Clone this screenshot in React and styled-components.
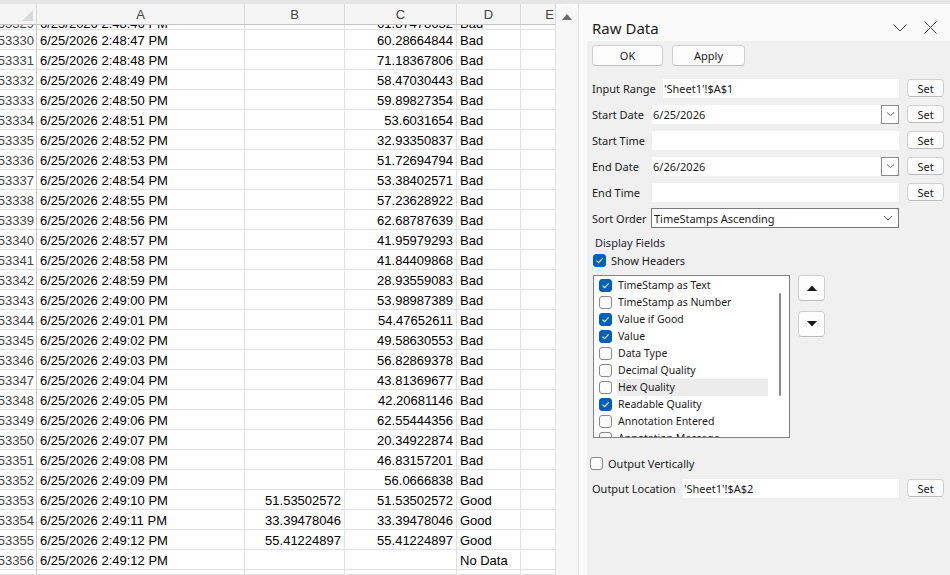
import { styled, createGlobalStyle } from "styled-components";

const GlobalStyle = createGlobalStyle`
  html, body {
    margin: 0;
    padding: 0;
    background: #ffffff;
  }
  #root {
    width: 950px;
    height: 575px;
    overflow: hidden;
  }
`;

const rows = [
  [53329, "6/25/2026 2:48:46 PM", "", "61.87478632", "Bad"],
  [53330, "6/25/2026 2:48:47 PM", "", "60.28664844", "Bad"],
  [53331, "6/25/2026 2:48:48 PM", "", "71.18367806", "Bad"],
  [53332, "6/25/2026 2:48:49 PM", "", "58.47030443", "Bad"],
  [53333, "6/25/2026 2:48:50 PM", "", "59.89827354", "Bad"],
  [53334, "6/25/2026 2:48:51 PM", "", "53.6031654", "Bad"],
  [53335, "6/25/2026 2:48:52 PM", "", "32.93350837", "Bad"],
  [53336, "6/25/2026 2:48:53 PM", "", "51.72694794", "Bad"],
  [53337, "6/25/2026 2:48:54 PM", "", "53.38402571", "Bad"],
  [53338, "6/25/2026 2:48:55 PM", "", "57.23628922", "Bad"],
  [53339, "6/25/2026 2:48:56 PM", "", "62.68787639", "Bad"],
  [53340, "6/25/2026 2:48:57 PM", "", "41.95979293", "Bad"],
  [53341, "6/25/2026 2:48:58 PM", "", "41.84409868", "Bad"],
  [53342, "6/25/2026 2:48:59 PM", "", "28.93559083", "Bad"],
  [53343, "6/25/2026 2:49:00 PM", "", "53.98987389", "Bad"],
  [53344, "6/25/2026 2:49:01 PM", "", "54.47652611", "Bad"],
  [53345, "6/25/2026 2:49:02 PM", "", "49.58630553", "Bad"],
  [53346, "6/25/2026 2:49:03 PM", "", "56.82869378", "Bad"],
  [53347, "6/25/2026 2:49:04 PM", "", "43.81369677", "Bad"],
  [53348, "6/25/2026 2:49:05 PM", "", "42.20681146", "Bad"],
  [53349, "6/25/2026 2:49:06 PM", "", "62.55444356", "Bad"],
  [53350, "6/25/2026 2:49:07 PM", "", "20.34922874", "Bad"],
  [53351, "6/25/2026 2:49:08 PM", "", "46.83157201", "Bad"],
  [53352, "6/25/2026 2:49:09 PM", "", "56.0666838", "Bad"],
  [53353, "6/25/2026 2:49:10 PM", "51.53502572", "51.53502572", "Good"],
  [53354, "6/25/2026 2:49:11 PM", "33.39478046", "33.39478046", "Good"],
  [53355, "6/25/2026 2:49:12 PM", "55.41224897", "55.41224897", "Good"],
  [53356, "6/25/2026 2:49:12 PM", "", "", "No Data"],
  ["", "", "", "", ""],
];

const fields = [
  ["TimeStamp as Text", true],
  ["TimeStamp as Number", false],
  ["Value if Good", true],
  ["Value", true],
  ["Data Type", false],
  ["Decimal Quality", false],
  ["Hex Quality", false, true],
  ["Readable Quality", true],
  ["Annotation Entered", false],
  ["Annotation Message", false],
];

const CheckMark = () => (
  <svg width="9" height="9" viewBox="0 0 9 9">
    <path d="M1.5 4.6 L3.6 6.6 L7.6 2.4" fill="none" stroke="#fff" strokeWidth="1.1" />
  </svg>
);

const Check = ({ on }) => <Box $on={on}>{on && <CheckMark />}</Box>;

const FieldRow = ({ label, width, value, combo, set = true }) => (
  <Row>
    <Label $w={width}>{label}</Label>
    <Field>
      <FieldText>{value}</FieldText>
      {combo && (
        <DropBtn>
          <svg width="9" height="6" viewBox="0 0 9 6">
            <path d="M1 1.5 L4.5 4.5 L8 1.5" fill="none" stroke="#555" strokeWidth="0.9" />
          </svg>
        </DropBtn>
      )}
    </Field>
    {set && <SetButton>Set</SetButton>}
  </Row>
);

const App = () => {
  return (
    <>
      <GlobalStyle />
      <Page>
        <TopStrip />
        <Main>
          <Sheet>
            <HeaderRow>
              <Corner />
              <ColHead>A</ColHead>
              <ColHead>B</ColHead>
              <ColHead>C</ColHead>
              <ColHead>D</ColHead>
              <ColHead $cut>E</ColHead>
            </HeaderRow>
            {rows.map((r, i) => {
              const partial = i === 0 || i === rows.length - 1;
              return (
                <SheetRow key={i} $h={partial ? 5 : 20} $top={i === 0}>
                  <RowNum>
                    <span>{r[0]}</span>
                  </RowNum>
                  <Cell>
                    <span>{r[1]}</span>
                  </Cell>
                  <Cell $right>
                    <span>{r[2]}</span>
                  </Cell>
                  <Cell $right>
                    <span>{r[3]}</span>
                  </Cell>
                  <Cell>
                    <span>{r[4]}</span>
                  </Cell>
                  <Cell />
                </SheetRow>
              );
            })}
          </Sheet>
          <ScrollBar>
            <svg width="10" height="7" viewBox="0 0 10 7">
              <path d="M0 7 L5 1 L10 7 Z" fill="#6b6b6b" />
            </svg>
          </ScrollBar>
          <Panel>
            <TitleBar>
              <Title>Raw Data</Title>
              <TitleIcons>
                <svg width="14" height="8" viewBox="0 0 14 8">
                  <path d="M0.5 0.5 L7 7 L13.5 0.5" fill="none" stroke="#454545" strokeWidth="1" />
                </svg>
                <svg width="13" height="13" viewBox="0 0 13 13">
                  <path d="M0.5 0.5 L12.5 12.5 M12.5 0.5 L0.5 12.5" fill="none" stroke="#454545" strokeWidth="1" />
                </svg>
              </TitleIcons>
            </TitleBar>
            <Content>
              <ButtonRow>
                <PushButton $w={71}>OK</PushButton>
                <PushButton $w={73}>Apply</PushButton>
              </ButtonRow>
              <Rows>
                <FieldRow label="Input Range" width={71} value="'Sheet1'!$A$1" />
                <FieldRow label="Start Date" width={60} value="6/25/2026" combo />
                <FieldRow label="Start Time" width={60} value="" />
                <FieldRow label="End Date" width={60} value="6/26/2026" combo />
                <FieldRow label="End Time" width={60} value="" />
                <Row>
                  <Label $w={59}>Sort Order</Label>
                  <Select>
                    <span>TimeStamps Ascending</span>
                    <svg width="10" height="6" viewBox="0 0 10 6">
                      <path d="M1 1 L5 5 L9 1" fill="none" stroke="#555" strokeWidth="0.9" />
                    </svg>
                  </Select>
                  <SetSpacer />
                </Row>
              </Rows>
              <Caption>Display Fields</Caption>
              <CheckLine $indent={1}>
                <Check on />
                <span>Show Headers</span>
              </CheckLine>
              <ListArea>
                <ListBox>
                  {fields.map(([name, on, hover]) => (
                    <ListItem key={name}>
                      <Check on={on} />
                      <ItemText $hover={hover}>{name}</ItemText>
                    </ListItem>
                  ))}
                  <ListThumb />
                </ListBox>
                <MoveButtons>
                  <MoveButton>
                    <svg width="10" height="6" viewBox="0 0 10 6">
                      <path d="M0 6 L5 0.5 L10 6 Z" fill="#1a1a1a" />
                    </svg>
                  </MoveButton>
                  <MoveButton>
                    <svg width="10" height="6" viewBox="0 0 10 6">
                      <path d="M0 0 L5 5.5 L10 0 Z" fill="#1a1a1a" />
                    </svg>
                  </MoveButton>
                </MoveButtons>
              </ListArea>
              <CheckLine $indent={-2} $top={18}>
                <Check on={false} />
                <span>Output Vertically</span>
              </CheckLine>
              <OutputRow>
                <FieldRow label="Output Location" width={91} value="'Sheet1'!$A$2" />
              </OutputRow>
            </Content>
          </Panel>
        </Main>
      </Page>
    </>
  );
};

export default App;

const Page = styled.div`
  width: 950px;
  height: 575px;
  display: flex;
  flex-direction: column;
  background: #ffffff;
  font-family: "Noto Sans", "Liberation Sans", sans-serif;
`;

const TopStrip = styled.div`
  height: 4px;
  background: #e6e6e6;
  flex-shrink: 0;
`;

const Main = styled.div`
  flex: 1;
  display: flex;
  min-height: 0;
`;

const cols = "37px 208px 100px 112px 64px 1fr";

const Sheet = styled.div`
  width: 556px;
  flex-shrink: 0;
  display: flex;
  flex-direction: column;
  overflow: hidden;
  font-family: "Liberation Sans", Arial, sans-serif;
  font-size: 13px;
  color: #000;
`;

const HeaderRow = styled.div`
  display: grid;
  grid-template-columns: ${cols};
  height: 21px;
  flex-shrink: 0;
  background: #f5f5f5;
  border-bottom: 1px solid #c4c4c4;
  box-sizing: border-box;
`;

const Corner = styled.div`
  border-right: 1px solid #d9d9d9;
  position: relative;
  &::after {
    content: "";
    position: absolute;
    right: 3px;
    bottom: 3px;
    border-style: solid;
    border-width: 0 0 11px 11px;
    border-color: transparent transparent #dadada transparent;
  }
`;

const ColHead = styled.div`
  display: flex;
  align-items: center;
  justify-content: ${(p) => (p.$cut ? "flex-end" : "center")};
  padding-right: ${(p) => (p.$cut ? "1px" : "0")};
  color: #444;
  border-right: 1px solid #d9d9d9;
`;

const SheetRow = styled.div`
  display: grid;
  grid-template-columns: ${cols};
  height: ${(p) => p.$h}px;
  flex-shrink: 0;
  overflow: hidden;
  & > div {
    align-items: ${(p) => (p.$top ? "flex-end" : "center")};
  }
  & > div > span {
    line-height: ${(p) => (p.$top ? "11px" : "19px")};
    padding-top: ${(p) => (p.$top ? "0" : "1px")};
  }
`;

const Cell = styled.div`
  display: flex;
  justify-content: ${(p) => (p.$right ? "flex-end" : "flex-start")};
  padding: 0 3px;
  border-right: 1px solid #e1e1e1;
  border-bottom: 1px solid #e1e1e1;
  overflow: hidden;
  white-space: nowrap;
  & > span {
    flex-shrink: 0;
  }
`;

const RowNum = styled(Cell)`
  justify-content: flex-end;
  padding: 0 2px 0 0;
  color: #444;
  border-right: 1px solid #c8c8c8;
`;

const ScrollBar = styled.div`
  width: 22px;
  flex-shrink: 0;
  margin-top: 2px;
  background: #f7f7f7;
  border-radius: 8px 8px 0 0;
  display: flex;
  justify-content: center;
  padding-top: 7px;
  box-sizing: border-box;
`;

const Panel = styled.div`
  flex: 1;
  display: flex;
  flex-direction: column;
  background: #fafafa;
  border-left: 1px solid #e2e2e2;
  color: #1b1b1b;
  font-size: 11px;
`;

const TitleBar = styled.div`
  height: 37px;
  flex-shrink: 0;
  display: flex;
  align-items: center;
  justify-content: space-between;
  padding: 10px 13px 0 13px;
  box-sizing: border-box;
`;

const Title = styled.div`
  font-size: 15px;
  color: #1b1b1b;
`;

const TitleIcons = styled.div`
  display: flex;
  align-items: center;
  gap: 17px;
`;

const Content = styled.div`
  flex: 1;
  margin-left: 8px;
  background: #f0f0f0;
  display: flex;
  flex-direction: column;
  padding: 4px 6px 0 5px;
`;

const ButtonRow = styled.div`
  display: flex;
  gap: 9px;
`;

const PushButton = styled.div`
  width: ${(p) => p.$w}px;
  height: 21px;
  box-sizing: border-box;
  background: #fdfdfd;
  border: 1px solid #d0d0d0;
  border-bottom-color: #bcbcbc;
  border-radius: 4px;
  display: flex;
  align-items: center;
  justify-content: center;
  font-size: 11px;
`;

const Rows = styled.div`
  display: flex;
  flex-direction: column;
  gap: 6px;
  margin-top: 12px;
`;

const Row = styled.div`
  display: flex;
  align-items: center;
  height: 20px;
`;

const Label = styled.div`
  width: ${(p) => p.$w}px;
  flex-shrink: 0;
  white-space: nowrap;
  font-size: 11px;
`;

const Field = styled.div`
  flex: 1;
  height: 19px;
  background: #ffffff;
  display: flex;
  align-items: center;
  font-size: 11px;
`;

const FieldText = styled.span`
  flex: 1;
  padding-left: 1px;
`;

const DropBtn = styled.div`
  width: 18px;
  height: 19px;
  box-sizing: border-box;
  border: 1px solid #8d8d8d;
  display: flex;
  align-items: center;
  justify-content: center;
  background: #fff;
`;

const SetButton = styled.div`
  width: 37px;
  height: 18px;
  margin-left: 8px;
  box-sizing: border-box;
  border: 1px solid #d0d0d0;
  border-bottom-color: #bcbcbc;
  border-radius: 4px;
  background: #fdfdfd;
  display: flex;
  align-items: center;
  justify-content: center;
  font-size: 11px;
`;

const SetSpacer = styled.div`
  width: 45px;
  flex-shrink: 0;
`;

const Select = styled.div`
  flex: 1;
  height: 20px;
  box-sizing: border-box;
  border: 1px solid #7a7a7a;
  background: #fff;
  display: flex;
  align-items: center;
  justify-content: space-between;
  padding: 0 5px 0 2px;
  font-size: 11px;
`;

const Caption = styled.div`
  margin: 8px 0 0 3px;
  height: 14px;
  line-height: 14px;
  color: #2a2438;
`;

const CheckLine = styled.div`
  display: flex;
  align-items: center;
  gap: 5px;
  height: 14px;
  margin: ${(p) => p.$top || 3}px 0 0 ${(p) => p.$indent}px;
  font-size: 11px;
`;

const Box = styled.div`
  width: 13px;
  height: 13px;
  box-sizing: border-box;
  border-radius: 3px;
  flex-shrink: 0;
  display: flex;
  align-items: center;
  justify-content: center;
  background: ${(p) => (p.$on ? "#005fb8" : "#fbfbfb")};
  border: 1px solid ${(p) => (p.$on ? "#005fb8" : "#8a8a8a")};
`;

const ListArea = styled.div`
  display: flex;
  gap: 8px;
  margin: 8px 0 0 1px;
  align-items: flex-start;
`;

const ListBox = styled.div`
  width: 197px;
  height: 163px;
  box-sizing: border-box;
  border: 1px solid #828282;
  background: #fff;
  overflow: hidden;
  position: relative;
  padding: 1px 0 0 5px;
`;

const ListItem = styled.div`
  height: 17px;
  display: flex;
  align-items: center;
  gap: 5px;
`;

const ItemText = styled.span`
  background: ${(p) => (p.$hover ? "#ececec" : "transparent")};
  width: 150px;
  height: 17px;
  line-height: 17px;
  padding-left: 1px;
  font-size: 10.5px;
  white-space: nowrap;
`;

const ListThumb = styled.div`
  position: absolute;
  right: 8px;
  top: 17px;
  width: 2px;
  height: 103px;
  border-radius: 1px;
  background: #8a8a8a;
`;

const MoveButtons = styled.div`
  display: flex;
  flex-direction: column;
  gap: 10px;
`;

const MoveButton = styled.div`
  width: 27px;
  height: 26px;
  box-sizing: border-box;
  border: 1px solid #d0d0d0;
  border-bottom-color: #bcbcbc;
  border-radius: 4px;
  background: #fdfdfd;
  display: flex;
  align-items: center;
  justify-content: center;
`;

const OutputRow = styled.div`
  margin-top: 8px;
`;
